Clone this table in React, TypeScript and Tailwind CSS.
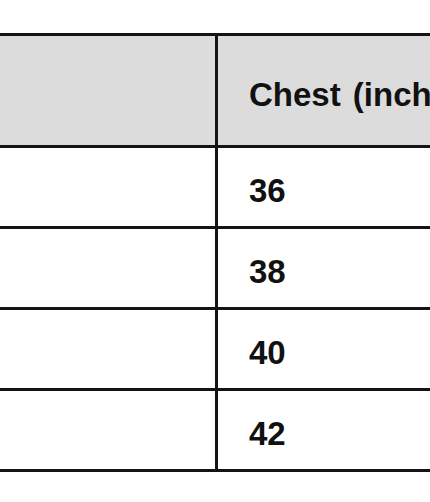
const rows = ["36", "38", "40", "42"];

export default function App() {
  return (
    <div className="w-[430px] h-[502px] overflow-hidden bg-white pt-[33px] font-['Liberation_Sans',Arial,sans-serif] text-[#111]">
      <div className="w-[720px] border-t-[3px] border-[#141414]">
        <div className="flex h-[112px] border-b-[3px] border-[#141414] bg-[#dcdcdc]">
          <div className="w-[215px] shrink-0" />
          <div className="flex flex-1 items-center border-l-[3px] border-[#141414] pl-[31px] pt-[7px] text-[33px] leading-none font-bold [word-spacing:3px]">
            Chest (inches)
          </div>
        </div>
        {rows.map((r) => (
          <div key={r} className="flex h-[81px] border-b-[3px] border-[#141414]">
            <div className="w-[215px] shrink-0" />
            <div className="flex flex-1 items-center border-l-[3px] border-[#141414] pl-[31px] pt-[7px] text-[33px] leading-none font-bold">
              {r}
            </div>
          </div>
        ))}
      </div>
    </div>
  );
}
